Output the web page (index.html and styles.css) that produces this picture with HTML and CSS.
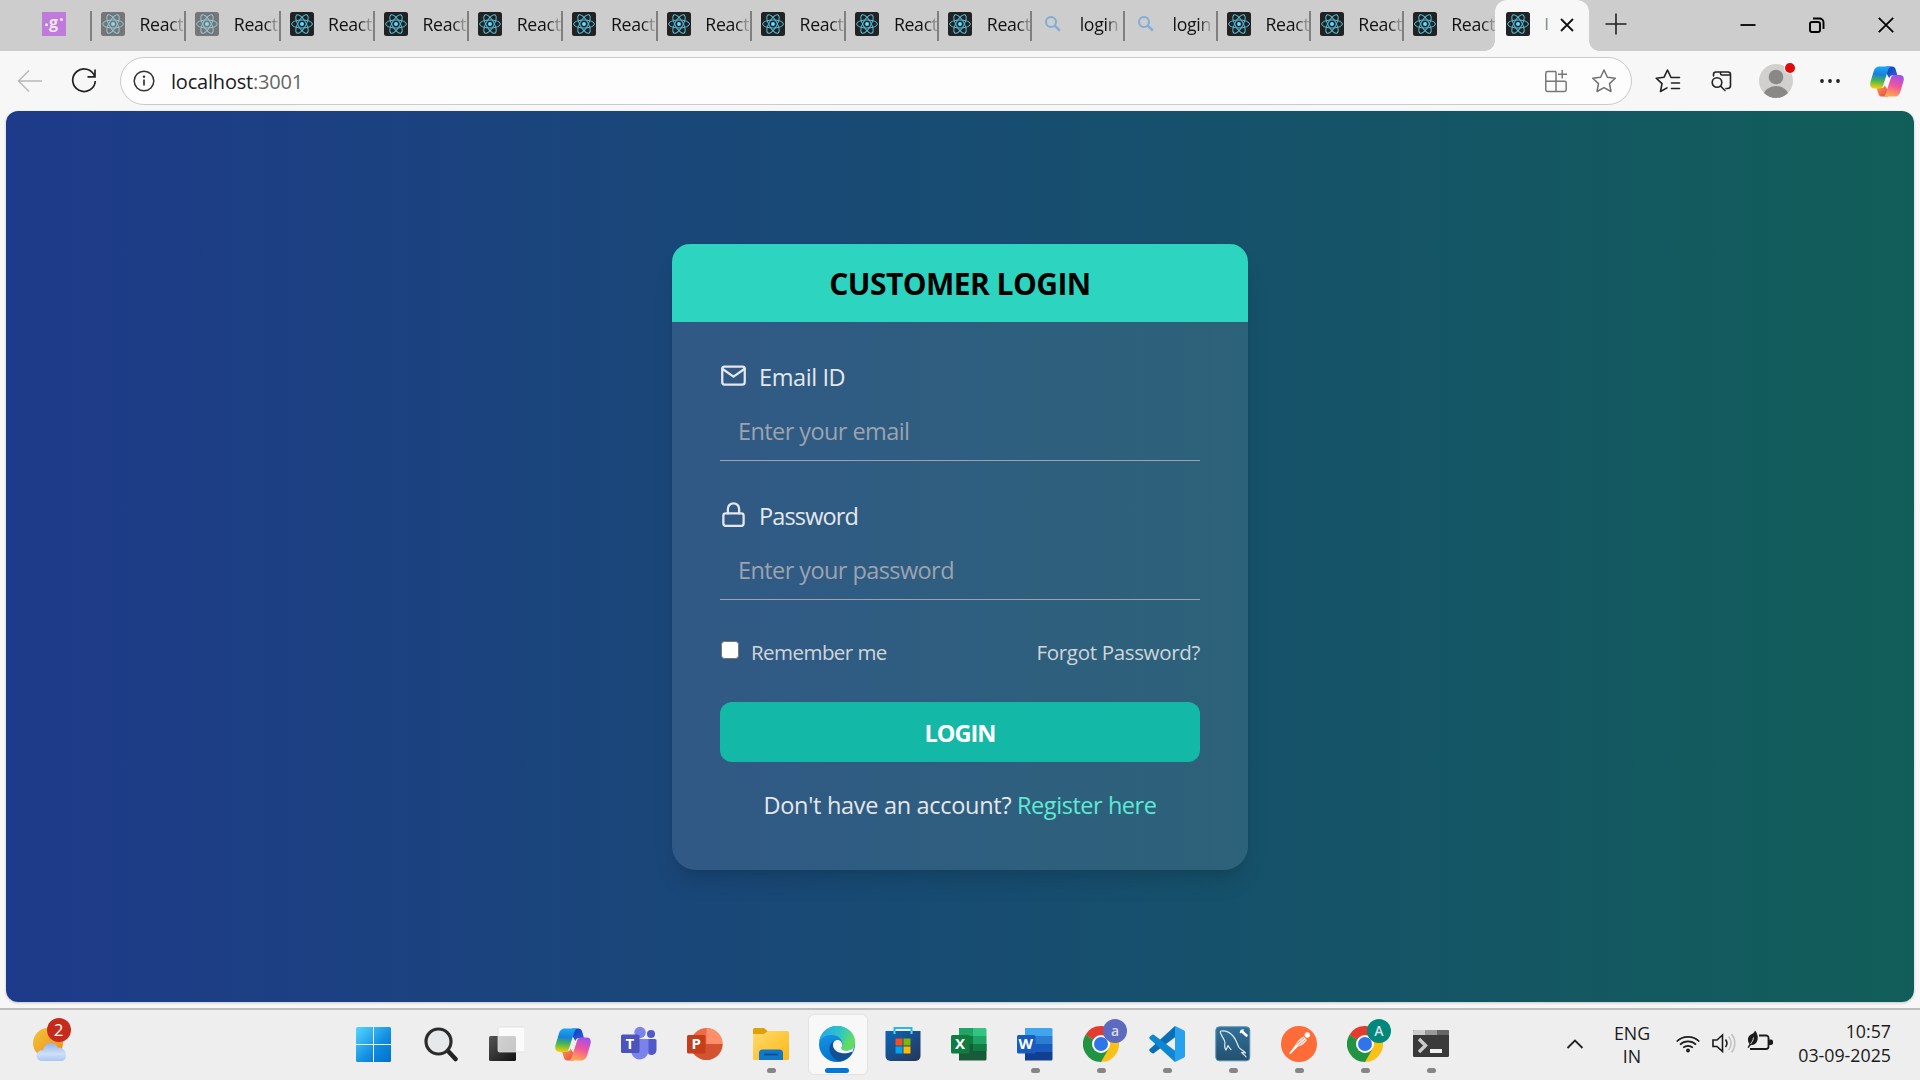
FILE: index.html
```html
<!DOCTYPE html>
<html lang="en">
<head>
<meta charset="utf-8">
<title>Customer Login</title>
<link rel="stylesheet" href="styles.css">
</head>
<body>
<svg class="defs" width="0" height="0" aria-hidden="true">
  <defs>
    <linearGradient id="cpA" x1="0.3" y1="0" x2="0.2" y2="1"><stop offset="0" stop-color="#19a7f2"/><stop offset=".35" stop-color="#1681dc"/><stop offset=".65" stop-color="#4bb84a"/><stop offset="1" stop-color="#ffcf0b"/></linearGradient>
    <linearGradient id="cpB" x1="0.7" y1="0" x2="0.4" y2="1"><stop offset="0" stop-color="#a14df0"/><stop offset=".5" stop-color="#f0569a"/><stop offset="1" stop-color="#ffab4a"/></linearGradient>
    <linearGradient id="cpC" x1="0" y1="0" x2="1" y2="1"><stop offset="0" stop-color="#0d3fb0"/><stop offset="1" stop-color="#2a63f0"/></linearGradient>
    <linearGradient id="cpD" x1="0" y1="0" x2="1" y2="1"><stop offset="0" stop-color="#ffa03a"/><stop offset="1" stop-color="#e2405a"/></linearGradient>
    <linearGradient id="winG" gradientUnits="userSpaceOnUse" x1="0" y1="0" x2="35" y2="35"><stop offset="0" stop-color="#53d8ff"/><stop offset=".6" stop-color="#0f8be0"/><stop offset="1" stop-color="#0070cc"/></linearGradient>
    <linearGradient id="edgeTop" x1="0" y1="0.3" x2="1" y2="0.6"><stop offset="0" stop-color="#2aa5ee"/><stop offset=".5" stop-color="#2bc4c8"/><stop offset="1" stop-color="#6be05a"/></linearGradient>
    <linearGradient id="edgeLow" x1="0" y1="0" x2="0.3" y2="1"><stop offset="0" stop-color="#1b9de8"/><stop offset="1" stop-color="#0372cf"/></linearGradient>
    <linearGradient id="folderG" x1="0" y1="0" x2="1" y2="1"><stop offset="0" stop-color="#ffda6e"/><stop offset="1" stop-color="#fdb813"/></linearGradient>
    <linearGradient id="storeG" x1="0" y1="0" x2="1" y2="1"><stop offset="0" stop-color="#0c66b8"/><stop offset="1" stop-color="#253558"/></linearGradient>
    <linearGradient id="sunG" x1="0" y1="0" x2="1" y2="1"><stop offset="0" stop-color="#f0c43c"/><stop offset="1" stop-color="#f58a14"/></linearGradient>
    <linearGradient id="cloudG" x1="0" y1="0" x2="0" y2="1"><stop offset="0" stop-color="#8fb4ee"/><stop offset=".6" stop-color="#cfe0f8"/><stop offset="1" stop-color="#a9c6f3"/></linearGradient>
    <linearGradient id="darkG" x1="0" y1="0" x2="1" y2="1"><stop offset="0" stop-color="#555"/><stop offset="1" stop-color="#111"/></linearGradient>
    <linearGradient id="mysqlG" x1="0" y1="0" x2="0" y2="1"><stop offset="0" stop-color="#31719b"/><stop offset="1" stop-color="#23506f"/></linearGradient>
    <symbol id="react" viewBox="0 0 24 24">
      <rect width="24" height="24" rx="2.5" fill="#222"/>
      <g fill="none" stroke="#53c1de" stroke-width="1"><ellipse cx="12" cy="12" rx="10.4" ry="4"/><ellipse cx="12" cy="12" rx="10.4" ry="4" transform="rotate(60 12 12)"/><ellipse cx="12" cy="12" rx="10.4" ry="4" transform="rotate(120 12 12)"/></g>
      <circle cx="12" cy="12" r="2" fill="#61dafb"/>
    </symbol>
    <symbol id="lens" viewBox="0 0 24 24"><circle cx="10" cy="10" r="5" fill="none" stroke="#80acd6" stroke-width="2"/><path d="M13.7 13.7 18.8 18.6" stroke="#80acd6" stroke-width="2.4"/></symbol>
    <symbol id="copilot" viewBox="0 0 36 32">
      <path d="M17 0h6.500c2 0 3 1 3.600 3l1.900 6.500h-5c-2 0-3 1-3.600 3L16 5z" fill="url(#cpC)"/>
      <path d="M19 32h-6.500c-2 0-3-1-3.600-3L7 23h5c2 0 3-1 3.600-3L20 27z" fill="url(#cpD)"/>
      <path d="M10 0h13c-2 0-3 1.400-3.700 3.400L14 20c-.8 2.500-2 3.500-4 3.500H4.500C1 23.500-.5 20.500.5 16.500L3.800 5.500C5 1.500 7 0 10 0z" fill="url(#cpA)"/>
      <path d="M26 32H13c2 0 3-1.400 3.700-3.400L22 12.500C22.800 10 24 9 26 9h5.500c3.500 0 5 2.500 4 6.500L32.200 26.500C31 30.500 29 32 26 32z" fill="url(#cpB)"/>
    </symbol>
    <symbol id="chrome" viewBox="0 0 36 36">
      <path d="M18 18 2.410 9A18 18 0 0 1 33.590 9z" fill="#e33b2e"/>
      <path d="M18 18 33.590 9A18 18 0 0 1 18 36z" fill="#fbc116"/>
      <path d="M18 18 18 36A18 18 0 0 1 2.410 9z" fill="#229342"/>
      <path d="M18 9H33.590L34 11 25.800 13.500z" fill="#e33b2e"/>
      <path d="M25.800 22.500 18 36 18 27z" fill="#229342"/><path d="M10.200 22.500 2.410 9 10 14z" fill="#229342"/>
      <circle cx="18" cy="18" r="9" fill="#fff"/><circle cx="18" cy="18" r="7" fill="#2f74e8"/>
    </symbol>
  </defs>
</svg>

<header class="tabstrip">
  <div class="pinned"><svg width="24" height="24" viewBox="0 0 24 24"><rect width="24" height="24" fill="#bf7bdc"/><circle cx="4.500" cy="12.800" r="1.500" fill="#f3e6f8"/><circle cx="19.500" cy="7.500" r="1.500" fill="#f3e6f8"/><text class="pin-letter" x="7" y="15.500">g</text></svg></div>
  <div class="tab wide asleep"><svg class="fav"><use href="#react"/></svg><span class="tab-title">React</span></div>
  <div class="tab wide asleep"><svg class="fav"><use href="#react"/></svg><span class="tab-title">React</span></div>
  <div class="tab wide"><svg class="fav"><use href="#react"/></svg><span class="tab-title">React</span></div>
  <div class="tab wide"><svg class="fav"><use href="#react"/></svg><span class="tab-title">React</span></div>
  <div class="tab wide"><svg class="fav"><use href="#react"/></svg><span class="tab-title">React</span></div>
  <div class="tab wide"><svg class="fav"><use href="#react"/></svg><span class="tab-title">React</span></div>
  <div class="tab wide"><svg class="fav"><use href="#react"/></svg><span class="tab-title">React</span></div>
  <div class="tab wide"><svg class="fav"><use href="#react"/></svg><span class="tab-title">React</span></div>
  <div class="tab"><svg class="fav"><use href="#react"/></svg><span class="tab-title">React</span></div>
  <div class="tab"><svg class="fav"><use href="#react"/></svg><span class="tab-title">React</span></div>
  <div class="tab"><svg class="fav"><use href="#lens"/></svg><span class="tab-title">login</span></div>
  <div class="tab"><svg class="fav"><use href="#lens"/></svg><span class="tab-title">login</span></div>
  <div class="tab"><svg class="fav"><use href="#react"/></svg><span class="tab-title">React</span></div>
  <div class="tab"><svg class="fav"><use href="#react"/></svg><span class="tab-title">React</span></div>
  <div class="tab"><svg class="fav"><use href="#react"/></svg><span class="tab-title">React</span></div>
  <div class="tab active"><svg class="fav"><use href="#react"/></svg><span class="tab-stub">l</span><svg class="tab-close" width="14" height="14" viewBox="0 0 14 14"><path d="M1 1 13 13M13 1 1 13" stroke="#111" stroke-width="1.800"/></svg></div>
  <svg class="new-tab" width="22" height="22" viewBox="0 0 22 22"><path d="M11 .5v21M.5 11h21" stroke="#222" stroke-width="1.600"/></svg>
  <div class="win-controls">
    <svg width="18" height="18" viewBox="0 0 18 18"><path d="M1.500 9h15" stroke="#000" stroke-width="1.800"/></svg>
    <svg width="18" height="18" viewBox="0 0 18 18" fill="none" stroke="#000" stroke-width="1.900"><rect x="2" y="6" width="10" height="10" rx="2"/><path d="M5 2.500h6.500a4 4 0 0 1 4 4V13"/></svg>
    <svg width="18" height="18" viewBox="0 0 18 18"><path d="M1.800 1.800 16.200 16.200M16.200 1.800 1.800 16.200" stroke="#000" stroke-width="1.800"/></svg>
  </div>
</header>

<nav class="toolbar">
  <div class="tool"><svg width="26" height="24" viewBox="0 0 26 24" fill="none" stroke="#b8b8b8" stroke-width="1.500"><path d="M25 12H1.500M12 1.500 1.500 12 12 22.500"/></svg></div>
  <div class="tool"><svg width="26" height="26" viewBox="0 0 26 26" fill="none" stroke="#222" stroke-width="1.700"><path d="M23.700 8.500A11.300 11.300 0 1 0 24.300 13M24 1.500V8.800H16.500"/></svg></div>
  <div class="address">
    <svg width="22" height="22" viewBox="0 0 22 22"><circle cx="11" cy="11" r="9.800" fill="none" stroke="#333" stroke-width="1.500"/><path d="M11 9.500v6" stroke="#333" stroke-width="1.700"/><circle cx="11" cy="6.800" r="1.200" fill="#333"/></svg>
    <span class="url"><b>localhost</b>:3001</span>
    <svg class="apps" width="24" height="24" viewBox="0 0 24 24" fill="none" stroke="#777" stroke-width="1.500"><path d="M12 2.500H3.500a1.700 1.700 0 0 0-1.700 1.700v16.600a1.700 1.700 0 0 0 1.700 1.700h17a1.700 1.700 0 0 0 1.700-1.700V14a1.700 1.700 0 0 0-1.700-1.700H1.800M12 2.500v20M18.200 1v8.500M14 5.200h9"/></svg>
    <svg width="26" height="26" viewBox="0 0 26 26" fill="none" stroke="#707070" stroke-width="1.500" stroke-linejoin="round"><path d="m13 2 3.400 7.200 7.900 1-5.800 5.400 1.500 7.900-7-3.900-7 3.900 1.500-7.900L1.700 10.200l7.900-1z"/></svg>
  </div>
  <div class="tool"><svg width="26" height="26" viewBox="0 0 26 26" fill="none" stroke="#222" stroke-width="1.600" stroke-linejoin="round" stroke-linecap="round"><path d="M24.500 9.500H16L12.500 2 9.100 9.200l-7.900 1 5.800 5.400-1.500 7.900 6.500-3.600M16.500 15h8M16.500 20.500h8"/></svg></div>
  <div class="tool"><svg width="24" height="24" viewBox="0 0 24 24" fill="none" stroke="#222" stroke-width="1.600" stroke-linecap="round"><path d="M3.500 7V5.500A2.500 2.500 0 0 1 6 3h12a2.500 2.500 0 0 1 2.500 2.500v11a3 3 0 0 1-3 3h-1.500M10.500 3v1.500a1.500 1.500 0 0 0 1.500 1.500h8.500"/><circle cx="7" cy="13.500" r="4.800"/><path d="m10.500 17 4.500 4.500"/></svg></div>
  <div class="tool avatar"><svg width="34" height="34" viewBox="0 0 34 34"><clipPath id="av"><circle cx="17" cy="17" r="17"/></clipPath><g clip-path="url(#av)"><rect width="34" height="34" fill="#d2d0ce"/><circle cx="17" cy="13" r="7.300" fill="#8a8886"/><ellipse cx="17" cy="32" rx="12.500" ry="10" fill="#8a8886"/></g></svg><i class="dot"></i></div>
  <div class="tool"><svg width="22" height="6" viewBox="0 0 22 6" fill="#222"><circle cx="3" cy="3" r="1.900"/><circle cx="11" cy="3" r="1.900"/><circle cx="19" cy="3" r="1.900"/></svg></div>
  <div class="tool side"><svg width="34" height="31"><use href="#copilot"/></svg></div>
</nav>

<main class="page">
  <form class="card">
    <h1 class="card-head"><span>CUSTOMER LOGIN</span></h1>
    <div class="card-body">
      <label class="label"><svg width="27" height="27" viewBox="0 0 24 24" class="line-icon"><path d="M4 4h16a2 2 0 0 1 2 2v12a2 2 0 0 1-2 2H4a2 2 0 0 1-2-2V6a2 2 0 0 1 2-2z"/><path d="m22 6-10 7L2 6"/></svg><span class="t-email">Email ID</span></label>
      <div class="field"><span class="p-email">Enter your email</span></div>
      <label class="label second"><svg width="27" height="27" viewBox="0 0 24 24" class="line-icon"><rect x="3" y="11" width="18" height="11" rx="2"/><path d="M7 11V7a5 5 0 0 1 10 0v4"/></svg><span class="t-pass">Password</span></label>
      <div class="field"><span class="p-pass">Enter your password</span></div>
      <div class="options"><i class="check"></i><span class="remember">Remember me</span><span class="forgot">Forgot Password?</span></div>
      <div class="login"><span>LOGIN</span></div>
      <p class="register"><span>Don't have an account? <a>Register here</a></span></p>
    </div>
  </form>
</main>

<footer class="taskbar">
  <div class="weather"><svg width="40" height="38" viewBox="0 0 40 38"><circle cx="15" cy="19" r="15" fill="url(#sunG)"/><path d="M8 37a5.500 5.500 0 0 1-1-10.500c1-.5 2-.5 3 0 1-4.500 4-7.500 8-7.500 3 0 5.500 2 6.500 4.500 4.500-.5 8.500 3 8.500 7.500 0 4-2 6-5 6z" fill="url(#cloudG)"/></svg><span class="badge">2</span></div>
  <div class="apps-row">
    <div class="app"><svg class="nudge" width="35" height="35" viewBox="0 0 35 35" fill="url(#winG)"><path d="M1.500 0H17v17H0V1.500A1.500 1.500 0 0 1 1.500 0zM18 0h15.500A1.500 1.500 0 0 1 35 1.500V17H18zM0 18h17v17H1.500A1.500 1.500 0 0 1 0 33.500zM18 18h17v15.500a1.500 1.500 0 0 1-1.500 1.500H18z"/></svg></div>
    <div class="app"><svg width="34" height="36" viewBox="0 0 34 36"><path d="m24 25 7.500 8" stroke="#222" stroke-width="4.500" stroke-linecap="round"/><circle cx="14.500" cy="15.500" r="12.500" fill="#e6e8ea" stroke="#2c2c2c" stroke-width="3.200"/></svg></div>
    <div class="app"><svg width="36" height="36" viewBox="0 0 36 36"><rect y="10" width="27" height="25" rx="1.500" fill="url(#darkG)"/><rect x="9" y="1" width="27" height="25" rx="1.500" fill="#fff" fill-opacity=".75" stroke="#ddd" stroke-width=".8"/></svg></div>
    <div class="app"><svg width="36" height="33"><use href="#copilot"/></svg></div>
    <div class="app"><svg width="36" height="36" viewBox="0 0 36 36"><circle cx="30" cy="8" r="4" fill="#5059c9"/><path d="M24 13h10a1.500 1.500 0 0 1 1.500 1.500V24a5 5 0 0 1-8 4z" fill="#5059c9"/><circle cx="19" cy="6.500" r="5.700" fill="#7b83eb"/><path d="M10 13h17.500v11c0 5.500-4 9.500-9 9.500S10 29 10 24z" fill="#7b83eb"/><rect y="8.500" width="18.500" height="18.500" rx="1.600" fill="#4b53bc"/><text class="office" x="4.500" y="22.500">T</text></svg></div>
    <div class="app"><svg width="36" height="36" viewBox="0 0 36 36"><circle cx="19.500" cy="18" r="16" fill="#ed6c47"/><path d="M19.500 2a16 16 0 0 1 16 16h-16z" fill="#ff8f6b"/><path d="M3.500 18h32a16 16 0 0 1-32 0z" fill="#d35230"/><rect y="9" width="18.500" height="18.500" rx="1.600" fill="#c43e1c"/><text class="office" x="4.500" y="23">P</text></svg></div>
    <div class="app run"><svg width="36" height="36" viewBox="0 0 36 36"><path d="M0 3.500A1.500 1.500 0 0 1 1.500 2H11l4 3.500-3 4H0z" fill="#e0a008"/><path d="M0 8h11l4-3h19.500A1.500 1.500 0 0 1 36 6.500v26a1.500 1.500 0 0 1-1.500 1.500h-33A1.500 1.500 0 0 1 0 32.500z" fill="url(#folderG)"/><path d="M6 34v-7a3.500 3.500 0 0 1 3.500-3.500h17A3.500 3.500 0 0 1 30 27v7z" fill="#0f78c8"/><path d="M11 28.500h14" stroke="#0a4f8c" stroke-width="1.800"/></svg></div>
    <div class="app run current"><svg width="36" height="36" viewBox="0 0 36 36"><circle cx="18" cy="18" r="18" fill="url(#edgeLow)"/><path d="M0 17C1 7 8.500 0 18 0c10.500 0 18 7.500 18 15.500 0 6-4 9-8.500 9-4 0-5.500-1.500-5-3 .3-1 1-2 1-3.500 0-5-4.500-9-11-9C6 9 1 12.500 0 17z" fill="url(#edgeTop)"/><path d="M15.500 14.500C11 17 9.500 21.500 11 26c1.700 5 6 9 11 9.300 5-1.300 9-4.300 11-8.300.4-1-.4-1.400-1.200-.9-5.300 2.900-17 1.400-18-6.600-.2-2 .5-3.800 1.700-5z" fill="#134f95"/><path d="M18 14c-3 .5-4.200 3-4 5.500.8 7.500 11.500 9.500 18 6.500 1-.5 1.600-.5 1.300.5L36 18c-1 4.500-4.500 6.500-8.500 6.500-4 0-5.500-1.500-5-3 .3-1 1-2 .5-4C22.500 15 20.500 13.700 18 14z" fill="#f7f7f7"/><path d="M36 15.500c0 6-4 9-8.500 9-4 0-5.500-1.500-5-3L28 12z" fill="#5fdc62" fill-opacity=".75"/></svg></div>
    <div class="app"><svg width="36" height="36" viewBox="0 0 36 36"><path d="M9.500 8V2h17v6" fill="none" stroke="#25b7ef" stroke-width="2"/><path d="M.5 5h35v25a5 5 0 0 1-5 5h-25a5 5 0 0 1-5-5z" fill="url(#storeG)"/><path d="M9.500 8V5M26.500 8V5" stroke="#59d1f8" stroke-width="2"/><path d="M10.500 12.500h7v7h-7z" fill="#f25022"/><path d="M18.500 12.500h7v7h-7z" fill="#7fba00"/><path d="M10.500 20.500h7v7h-7z" fill="#00a4ef"/><path d="M18.500 20.500h7v7h-7z" fill="#ffb900"/></svg></div>
    <div class="app"><svg width="36" height="36" viewBox="0 0 36 36"><path d="M8 2h14v8H8z" fill="#21a366"/><path d="M22 2h12a1.500 1.500 0 0 1 1.500 1.500V10H22z" fill="#33c481"/><path d="M8 10h14v8H8z" fill="#107c41"/><path d="M22 10h13.500v8H22z" fill="#21a366"/><path d="M8 18h27.500v15a1.500 1.500 0 0 1-1.500 1.500H8z" fill="#185c37"/><path d="M22 18h13.500v7H22z" fill="#107c41"/><rect y="9" width="18.500" height="18.500" rx="1.600" fill="#107c41"/><text class="office" x="4" y="23">X</text></svg></div>
    <div class="app run"><svg width="36" height="36" viewBox="0 0 36 36"><path d="M8 2h26a1.500 1.500 0 0 1 1.500 1.500V10H8z" fill="#41a5ee"/><path d="M8 10h27.500v8H8z" fill="#2b7cd3"/><path d="M8 18h27.500v8H8z" fill="#185abd"/><path d="M8 26h27.500v7a1.500 1.500 0 0 1-1.500 1.500H8z" fill="#103f91"/><rect y="9" width="18.500" height="18.500" rx="1.600" fill="#185abd"/><text class="office" x="1.500" y="23">W</text></svg></div>
    <div class="app run"><svg width="36" height="36"><use href="#chrome"/></svg><span class="profile violet">a</span></div>
    <div class="app run"><svg width="36" height="36" viewBox="0 0 36 36"><path d="M26 0 .8 23a1.600 1.600 0 0 0 0 2.300l2 1.800a1.600 1.600 0 0 0 2 .1L27 10.500z" fill="#0b6db3"/><path d="M26 36 .8 13a1.600 1.600 0 0 1 0-2.300l2-1.800a1.600 1.600 0 0 1 2-.1L27 25.500z" fill="#0f86d0"/><path d="m26 0 8.800 4.200A2 2 0 0 1 36 6v24a2 2 0 0 1-1.200 1.800L26 36z" fill="#27a0ee"/></svg></div>
    <div class="app run"><svg width="36" height="36" viewBox="0 0 36 36"><rect x=".8" y=".8" width="34" height="34" rx="3.500" fill="url(#mysqlG)" stroke="#5b8fb2" stroke-width="1"/><g fill="none" stroke="#dfeaf2" stroke-width="1.200" stroke-linejoin="round" stroke-linecap="round"><path d="M11 24c-1.500-2-1.500-5-1-7.500C9.500 13 7.500 12 6.500 9 5.500 7 4.500 5.500 6 5c4-.5 9 1.500 12 5 3.500 4 4 8 6 11.500 1.500 2 5 3.500 6.500 5.500l-4-.5c1 1.500 4 2.500 4.500 4.500M11 24l2-4.500c1 1.500 1.500 3 3 4"/></g><path d="m26.500 5 5 4.500" stroke="#fff" stroke-width="2.600" stroke-linecap="round"/><path d="M25 6.800 28.500 3.500" stroke="#fff" stroke-width="1.600"/></svg></div>
    <div class="app run"><svg width="36" height="36" viewBox="0 0 36 36"><circle cx="18" cy="18" r="18" fill="#ff6c37"/><circle cx="26.300" cy="9" r="2.700" fill="#fff"/><path d="m22.500 10.500 3.500 3.500c-2.500 4-6 5.500-9 6.500l-7.500 7.500-1.500-.5 6-8c2-4 5-7 8.500-9z" fill="#fff"/><path d="m15 18.500 8-6.500M17 19.500l8-6" stroke="#ff6c37" stroke-width=".8"/></svg></div>
    <div class="app run"><svg width="36" height="36"><use href="#chrome"/></svg><span class="profile green">A</span></div>
    <div class="app run"><svg width="36" height="36" viewBox="0 0 36 36"><rect y="4" width="36" height="27" rx="1.500" fill="#3a3a3a"/><path d="M1.500 4H12v5H0V5.500A1.500 1.500 0 0 1 1.500 4z" fill="#ccc"/><path d="M12 4h12v5H12z" fill="#999"/><path d="M24 4h10.500A1.500 1.500 0 0 1 36 5.500V9H24z" fill="#666"/><path d="m6 13 6.500 6.500L6 26" fill="none" stroke="#ccc" stroke-width="3.400"/><path d="M17 25h12" stroke="#f0f0f0" stroke-width="4"/></svg></div>
  </div>
  <div class="tray">
    <svg class="chev" width="18" height="12" viewBox="0 0 18 12"><path d="m1.500 10 7.500-7.500 7.500 7.500" fill="none" stroke="#222" stroke-width="1.800"/></svg>
    <div class="lang"><span>ENG</span><span>IN</span></div>
    <svg class="wifi" width="24" height="24" viewBox="0 0 24 24" fill="none" stroke="#1b1b1b" stroke-width="1.700"><path d="M.7 10.500a16 16 0 0 1 22.600 0M4 13.700a11.500 11.500 0 0 1 16 0M7.200 16.700a7 7 0 0 1 9.600 0"/><circle cx="12" cy="19.500" r="1.900" fill="#1b1b1b" stroke="none"/></svg>
    <svg class="vol" width="24" height="24" viewBox="0 0 24 24" fill="none" stroke="#1b1b1b" stroke-width="1.600"><path d="M1 9v6.500h4l5.500 5V4L5 9zM13.500 8.500a6 6 0 0 1 0 7.500"/><path d="M16.500 5.500a10 10 0 0 1 0 13.500M19.500 3a14.500 14.500 0 0 1 0 18.500" stroke="#c3c3c3"/></svg>
    <svg class="batt" width="26" height="24" viewBox="0 0 26 24"><path d="M12 5.500h7a2.500 2.500 0 0 1 2.500 2.500v8.500a2.500 2.500 0 0 1-2.500 2.500H3" fill="none" stroke="#1b1b1b" stroke-width="1.800"/><path d="M22 9.500h1.500a2.700 2.700 0 0 1 0 5.500H22z" fill="#1b1b1b"/><path d="M8 .5c3 3.500 3.500 8 2 11-1.200 2.500-3.500 4-6 3.500L1.500 18l-1-.5L2.500 14C0 11 .5 6 4 4.500 6 3.500 7.500 2.500 8 .5z" fill="#1b1b1b"/><path d="M6.500 7.500C6.200 10 5 12 3.500 14" stroke="#eee" stroke-width=".9" fill="none"/></svg>
    <div class="clock"><span>10:57</span><span class="date">03-09-2025</span></div>
  </div>
</footer>
</body>
</html>
```
FILE: styles.css
```css
* { box-sizing: border-box; }
body { margin: 0; width: 1920px; height: 1080px; overflow: hidden; display: flex; flex-direction: column; background: #f7f7f7; font-family: "Open Sans", "Noto Sans", sans-serif; color: #1b1b1b; }
svg { display: block; flex: none; }
.defs { position: absolute; }

.tabstrip { height: 51px; background: #cdcdcd; display: flex; align-items: flex-start; flex: none; }
.pinned { width: 90px; padding: 12px 0 0 42px; flex: none; }
.pin-letter { font: 700 16px "Open Sans", sans-serif; fill: #f3e6f8; }
.tab { width: 92.9px; height: 51px; flex: none; display: flex; padding: 12px 0 0 11px; background: linear-gradient(#808080, #808080) 0 11px / 2px 30px no-repeat; }
.tab.wide { width: 94.3px; }
.fav { width: 24px; height: 24px; }
.asleep .fav { opacity: .5; }
.tab-title { margin-left: 14.5px; font-size: 17.7px; line-height: 24px; letter-spacing: -.3px; color: transparent; background: linear-gradient(90deg, #111 70%, #999 95%); -webkit-background-clip: text; background-clip: text; height: 26px; }
.tab.active { width: 94px; background: #f7f7f7; border-radius: 12px 12px 0 0; padding-left: 11px; position: relative; }
.tab.active::before, .tab.active::after { content: ""; position: absolute; bottom: 0; width: 10px; height: 10px; }
.tab.active::before { left: -10px; background: radial-gradient(circle at 0 0, transparent 9.5px, #f7f7f7 10px); }
.tab.active::after { right: -10px; background: radial-gradient(circle at 100% 0, transparent 9.5px, #f7f7f7 10px); }
.tab-stub { margin-left: 15px; font-size: 17px; line-height: 24px; color: #888; }
.tab-close { margin: 6px 0 0 11px; }
.new-tab { margin: 13px 0 0 16px; }
.win-controls { margin-left: auto; display: flex; padding-top: 16px; }
.win-controls svg { margin: 0 25.5px; }

.toolbar { height: 60px; flex: none; display: flex; align-items: center; padding-left: 3px; }
.tool { width: 54px; display: flex; justify-content: center; flex: none; }
.tool.side { width: 60px; }
.address { width: 1512px; height: 48px; margin: 0 9px; flex: none; border: 1.5px solid #cbcbcb; border-radius: 24px; background: #fdfdfd; display: flex; align-items: center; padding: 0 14px 0 12px; }
.url { margin-left: 16px; font-size: 20px; color: #666; letter-spacing: -.2px; }
.url b { font-weight: 400; color: #1b1b1b; }
.apps { margin-left: auto; margin-right: 23px; }
.avatar { position: relative; }
.dot { position: absolute; left: 36px; top: -1px; width: 10px; height: 10px; border-radius: 50%; background: #e00b0b; box-shadow: 0 0 0 1px #f7f7f7; }

.page { height: 891px; margin: 0 6px; flex: none; border-radius: 12px; background: linear-gradient(to right, #1e3a8a, #115e59); box-shadow: 0 1px 3px rgba(0,0,0,.2); display: flex; justify-content: center; align-items: center; }
.card { width: 576px; height: 626px; border-radius: 24px; background: rgba(255,255,255,.1); box-shadow: 0 15px 23px -4px rgba(0,0,0,.12), 0 6px 9px -6px rgba(0,0,0,.1); }
.card-head { margin: 0; height: 78px; border-radius: 18px 18px 0 0; background: #2dd4bf; color: #000; font-size: 30px; font-weight: 700; line-height: 80px; letter-spacing: -.55px; text-align: center; }
.card-body { padding: 39px 48px 0; }
.label { display: flex; align-items: flex-start; height: 36px; font-size: 23.5px; line-height: 32px; color: #e5e7eb; }
.label.second { margin-top: 39px; }
.label span { margin-left: 12px; font-weight: 500; }
.t-email { letter-spacing: -.4px; }
.t-pass { letter-spacing: -.85px; }
.line-icon { margin-top: 1px; fill: none; stroke: #e5e7eb; stroke-width: 2; stroke-linecap: round; stroke-linejoin: round; }
.field { height: 64px; border-bottom: 1px solid #9ca3af; padding: 18px 18px 0; font-size: 23.5px; line-height: 33px; color: #9ca3af; letter-spacing: -.58px; }
.options { display: flex; align-items: flex-start; margin-top: 38px; height: 30px; font-size: 20.5px; line-height: 28px; color: #d1d5db; }
.check { width: 18px; height: 18px; margin: 3px 0 0 1px; background: #fff; border: 1.5px solid #767676; border-radius: 3.5px; }
.remember { margin-left: 12px; letter-spacing: -.55px; }
.forgot { margin-left: auto; letter-spacing: -.32px; }
.login { margin-top: 34px; height: 60px; border-radius: 12px; background: #14b8a6; color: #fff; font-size: 23.5px; font-weight: 700; line-height: 63px; letter-spacing: -1px; text-align: center; }
.register { margin: 25px 0 0; font-size: 23.5px; line-height: 36px; color: #e5e7eb; text-align: center; white-space: nowrap; letter-spacing: -.3px; }
.register a { color: #5eead4; letter-spacing: -.45px; }

.taskbar { height: 72px; margin-top: 6px; flex: none; background: #eee; border-top: 2px solid #bdbdbd; display: flex; }
.weather { position: relative; width: 342px; padding: 14px 0 0 33px; flex: none; }
.badge { position: absolute; left: 46.5px; top: 8px; width: 24px; height: 24px; border-radius: 50%; background: #c42b1c; color: #fff; font-size: 17px; line-height: 24px; text-align: center; }
.apps-row { display: flex; flex: none; }
.app { position: relative; width: 66px; height: 68px; display: flex; justify-content: center; align-items: center; }
.nudge { margin-right: 3px; }
.current::before { content: ""; position: absolute; left: 4px; top: 4px; width: 58px; height: 59px; border-radius: 6px; background: #f8f8f8; border: 1.5px solid #e3e3e3; }
.app svg { position: relative; }
.run::after { content: ""; position: absolute; left: 28.5px; top: 58px; width: 9px; height: 5px; border-radius: 2.5px; background: #868686; }
.run.current::after { left: 21px; width: 24px; background: #0078d4; }
.office { font: 700 15px "Open Sans", sans-serif; fill: #fff; }
.profile { position: absolute; left: 35px; top: 9px; width: 24px; height: 24px; border-radius: 50%; color: #dde; font-size: 14px; line-height: 23px; font-weight: 600; text-align: center; }
.violet { background: #5c6bc0; }
.green { background: #00897b; }
.tray { margin-left: auto; display: flex; align-items: flex-start; font-size: 17.8px; padding-right: 29px; }
.chev { margin-top: 28px; }
.lang, .clock { display: flex; flex-direction: column; line-height: 23px; }
.lang { align-items: center; width: 60px; margin: 12px 0 0 18px; }
.clock { align-items: flex-end; width: 104px; margin: 8.500px 0 0 14px; line-height: 24px; white-space: nowrap; }
.wifi { margin: 21px 0 0 14px; }
.vol { margin: 21px 0 0 12px; }
.batt { margin: 20px 0 0 11px; }
```
